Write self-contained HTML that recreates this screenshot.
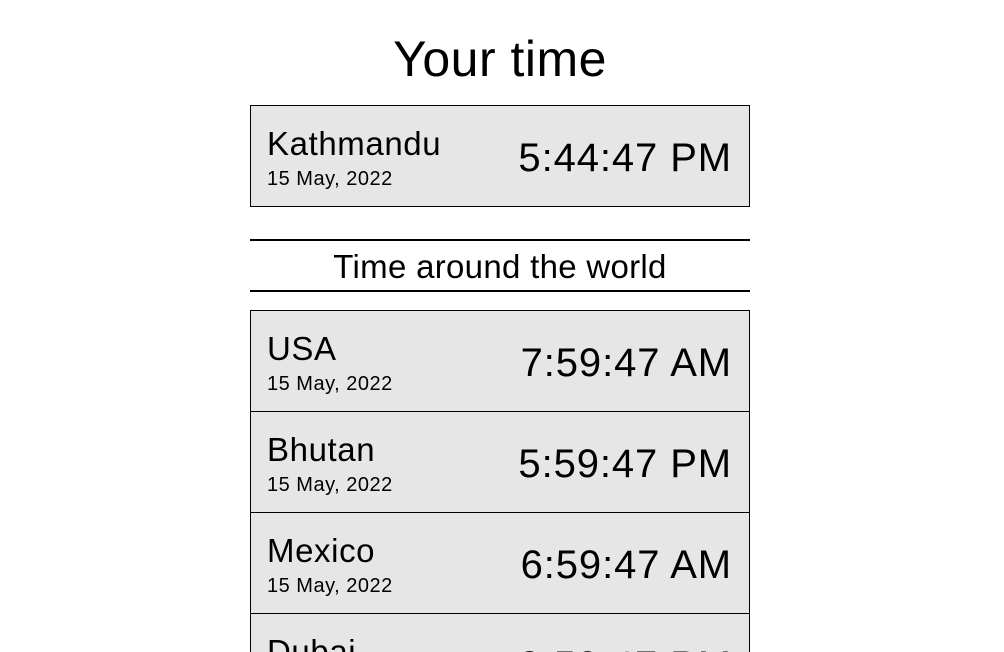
<!DOCTYPE html>
<html><head><style>
html,body{margin:0;width:1004px;height:652px;overflow:hidden}
body{background:#fff;font-family:"Liberation Sans",sans-serif;color:#000;position:relative}
.a{position:absolute;line-height:1;white-space:nowrap}
.card{position:absolute;left:250px;width:498px;height:100px;border:1px solid #000;background:#e6e6e6}
.n{position:absolute;left:16px;top:21px;font-size:33px;line-height:1;letter-spacing:0.6px}
.d{position:absolute;left:16px;top:63px;font-size:20px;line-height:1;letter-spacing:0.5px}
.t{position:absolute;right:17px;top:32px;font-size:40px;line-height:1;letter-spacing:0.9px}
.hr{position:absolute;left:250px;width:500px;height:2px;background:#000}
</style></head><body>
<div class="a" style="left:0;width:1000px;text-align:center;top:34px;font-size:50px;letter-spacing:0.5px">Your time</div>
<div class="card" style="top:105px"><div class="n">Kathmandu</div><div class="d">15 May, 2022</div><div class="t">5:44:47 PM</div></div>
<div class="hr" style="top:239px"></div>
<div class="a" style="left:0;width:1000px;text-align:center;top:250px;font-size:33px;letter-spacing:0.3px">Time around the world</div>
<div class="hr" style="top:290px"></div>
<div class="card" style="top:310px"><div class="n">USA</div><div class="d">15 May, 2022</div><div class="t">7:59:47 AM</div></div>
<div class="card" style="top:411px"><div class="n">Bhutan</div><div class="d">15 May, 2022</div><div class="t">5:59:47 PM</div></div>
<div class="card" style="top:512px"><div class="n">Mexico</div><div class="d">15 May, 2022</div><div class="t">6:59:47 AM</div></div>
<div class="card" style="top:613px"><div class="n">Dubai</div><div class="d">15 May, 2022</div><div class="t">3:59:47 PM</div></div>
</body></html>
